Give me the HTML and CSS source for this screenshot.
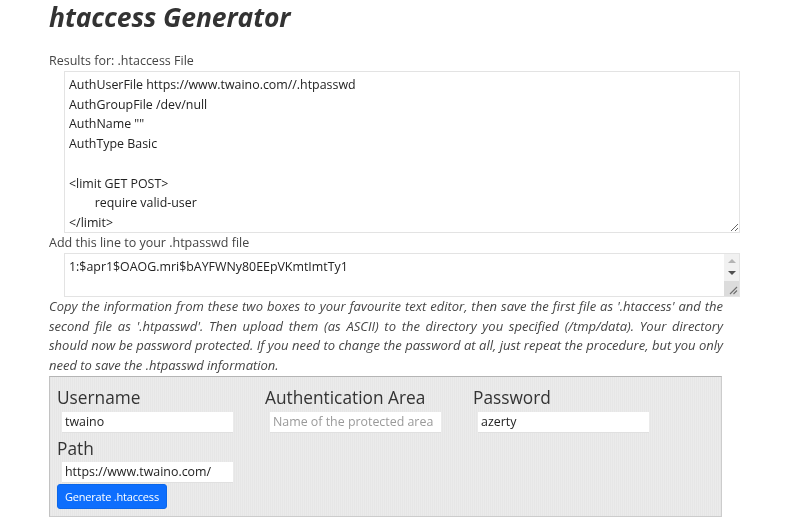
FILE: index.html
```html
<!DOCTYPE html>
<html lang="en">
<head>
<meta charset="utf-8">
<title>htaccess Generator</title>
<link rel="stylesheet" href="styles.css">
</head>
<body>
<main class="page">
  <h1 class="title">htaccess Generator</h1>
  <div class="label">Results for: .htaccess File</div>
  <textarea class="result result-main" spellcheck="false">AuthUserFile https://www.twaino.com//.htpasswd
AuthGroupFile /dev/null
AuthName ""
AuthType Basic

&lt;limit GET POST&gt;
	require valid-user
&lt;/limit&gt;</textarea>
  <div class="label">Add this line to your .htpasswd file</div>
  <div class="pass-wrap">
    <textarea class="result result-pass" spellcheck="false">1:$apr1$OAOG.mri$bAYFWNy80EEpVKmtImtTy1</textarea>
    <div class="scrollbar" aria-hidden="true">
      <div class="sb-track">
        <span class="sb-arrow sb-up"></span>
        <span class="sb-arrow sb-down"></span>
      </div>
      <div class="sb-corner">
        <svg width="15" height="15" viewBox="0 0 15 15"><path d="M6 13 L13 6 M9.5 13 L13 9.5" stroke="#6e6e6e" stroke-width="1.1" fill="none"/></svg>
      </div>
    </div>
  </div>
  <p class="note">Copy the information from these two boxes to your favourite text editor, then save the first file as '.htaccess' and the second file as '.htpasswd'. Then upload them (as ASCII) to the directory you specified (/tmp/data). Your directory should now be password protected. If you need to change the password at all, just repeat the procedure, but you only need to save the .htpasswd information.</p>
  <form class="panel">
    <div class="fields">
      <div class="field">
        <label class="field-label">Username</label>
        <input class="field-input" type="text" value="twaino">
      </div>
      <div class="field">
        <label class="field-label">Authentication Area</label>
        <input class="field-input" type="text" placeholder="Name of the protected area">
      </div>
      <div class="field">
        <label class="field-label">Password</label>
        <input class="field-input" type="text" value="azerty">
      </div>
      <div class="field field-path">
        <label class="field-label">Path</label>
        <input class="field-input" type="text" value="https://www.twaino.com/">
      </div>
    </div>
    <button class="btn" type="button">Generate .htaccess</button>
  </form>
</main>
</body>
</html>
```

FILE: styles.css
```css
html, body {
  margin: 0;
  padding: 0;
  background: #ffffff;
}

body {
  font-family: "Open Sans", "Noto Sans", sans-serif;
  color: #444444;
}

.page {
  width: 674px;
  padding-left: 49px;
}

.title {
  margin: 0 0 17px 0;
  font-family: "Open Sans", sans-serif;
  font-weight: 700;
  font-style: italic;
  font-size: 26.5px;
  line-height: 34px;
  color: #333333;
  letter-spacing: -0.1px;
}

.label {
  font-size: 12.5px;
  line-height: 20px;
  color: #444444;
}

.result {
  display: block;
  box-sizing: border-box;
  margin: 0 0 0 15px;
  width: 676px;
  padding: 3px 4px;
  border: 1px solid #e3e3e3;
  font-family: "Open Sans", sans-serif;
  font-size: 12.4px;
  line-height: 19.7px;
  color: #222222;
  tab-size: 8;
  outline: none;
}

.result-main {
  height: 162px;
}

.pass-wrap {
  position: relative;
  margin-left: 15px;
  width: 676px;
}

.result-pass {
  margin: 0;
  height: 44px;
  resize: none;
  overflow: hidden;
}

.scrollbar {
  position: absolute;
  top: 1px;
  right: 1px;
  bottom: 1px;
  width: 15px;
  display: flex;
  flex-direction: column;
  background: #f1f1f1;
}

.sb-track {
  flex: 1;
  position: relative;
}

.sb-arrow {
  position: absolute;
  left: 4px;
  width: 0;
  height: 0;
  border-left: 4px solid transparent;
  border-right: 4px solid transparent;
}

.sb-up {
  top: 5px;
  border-bottom: 4px solid #b4b4b4;
}

.sb-down {
  top: 17px;
  border-top: 4px solid #505050;
}

.sb-corner {
  height: 15px;
  background: #dcdcdc;
}

.sb-corner svg {
  display: block;
}

.note {
  margin: 0;
  font-size: 13px;
  line-height: 19.7px;
  font-style: italic;
  text-align: justify;
  color: #444444;
}

.panel {
  box-sizing: border-box;
  width: 673px;
  height: 141px;
  margin: 0;
  padding: 9px 7px 8px 7px;
  border: 1px solid #cccccc;
  border-top-color: #b5b5b5;
  border-left-color: #c2c2c2;
  background: repeating-linear-gradient(90deg, #e6e6e6 0 1px, #ebebeb 1px 2px);
}

.fields {
  display: grid;
  grid-template-columns: 208px 208px 208px;
}

.field {
  display: flex;
  flex-direction: column;
  align-items: flex-start;
}

.field-label {
  font-size: 17.3px;
  line-height: 24px;
  color: #333333;
}

.field-input {
  box-sizing: border-box;
  width: 171px;
  height: 21px;
  margin: 2px 0 3px 5px;
  padding: 0 3px;
  border: none;
  border-bottom: 1px solid #e0e0e0;
  background: #ffffff;
  font-family: "Open Sans", sans-serif;
  font-size: 12.4px;
  color: #222222;
  outline: none;
}

.field-input::placeholder {
  color: #9a9a9a;
}

.field-path .field-label {
  margin-top: 1px;
}

.field-path .field-input {
  margin-top: 1px;
  margin-bottom: 1px;
}

.btn {
  display: block;
  height: 25px;
  padding: 0 7px;
  border: 1px solid #0b66e8;
  border-radius: 3px;
  background: #0d6efd;
  color: #ffffff;
  font-family: "Open Sans", sans-serif;
  font-size: 11px;
  letter-spacing: -0.2px;
  line-height: 23px;
  cursor: pointer;
}
```
